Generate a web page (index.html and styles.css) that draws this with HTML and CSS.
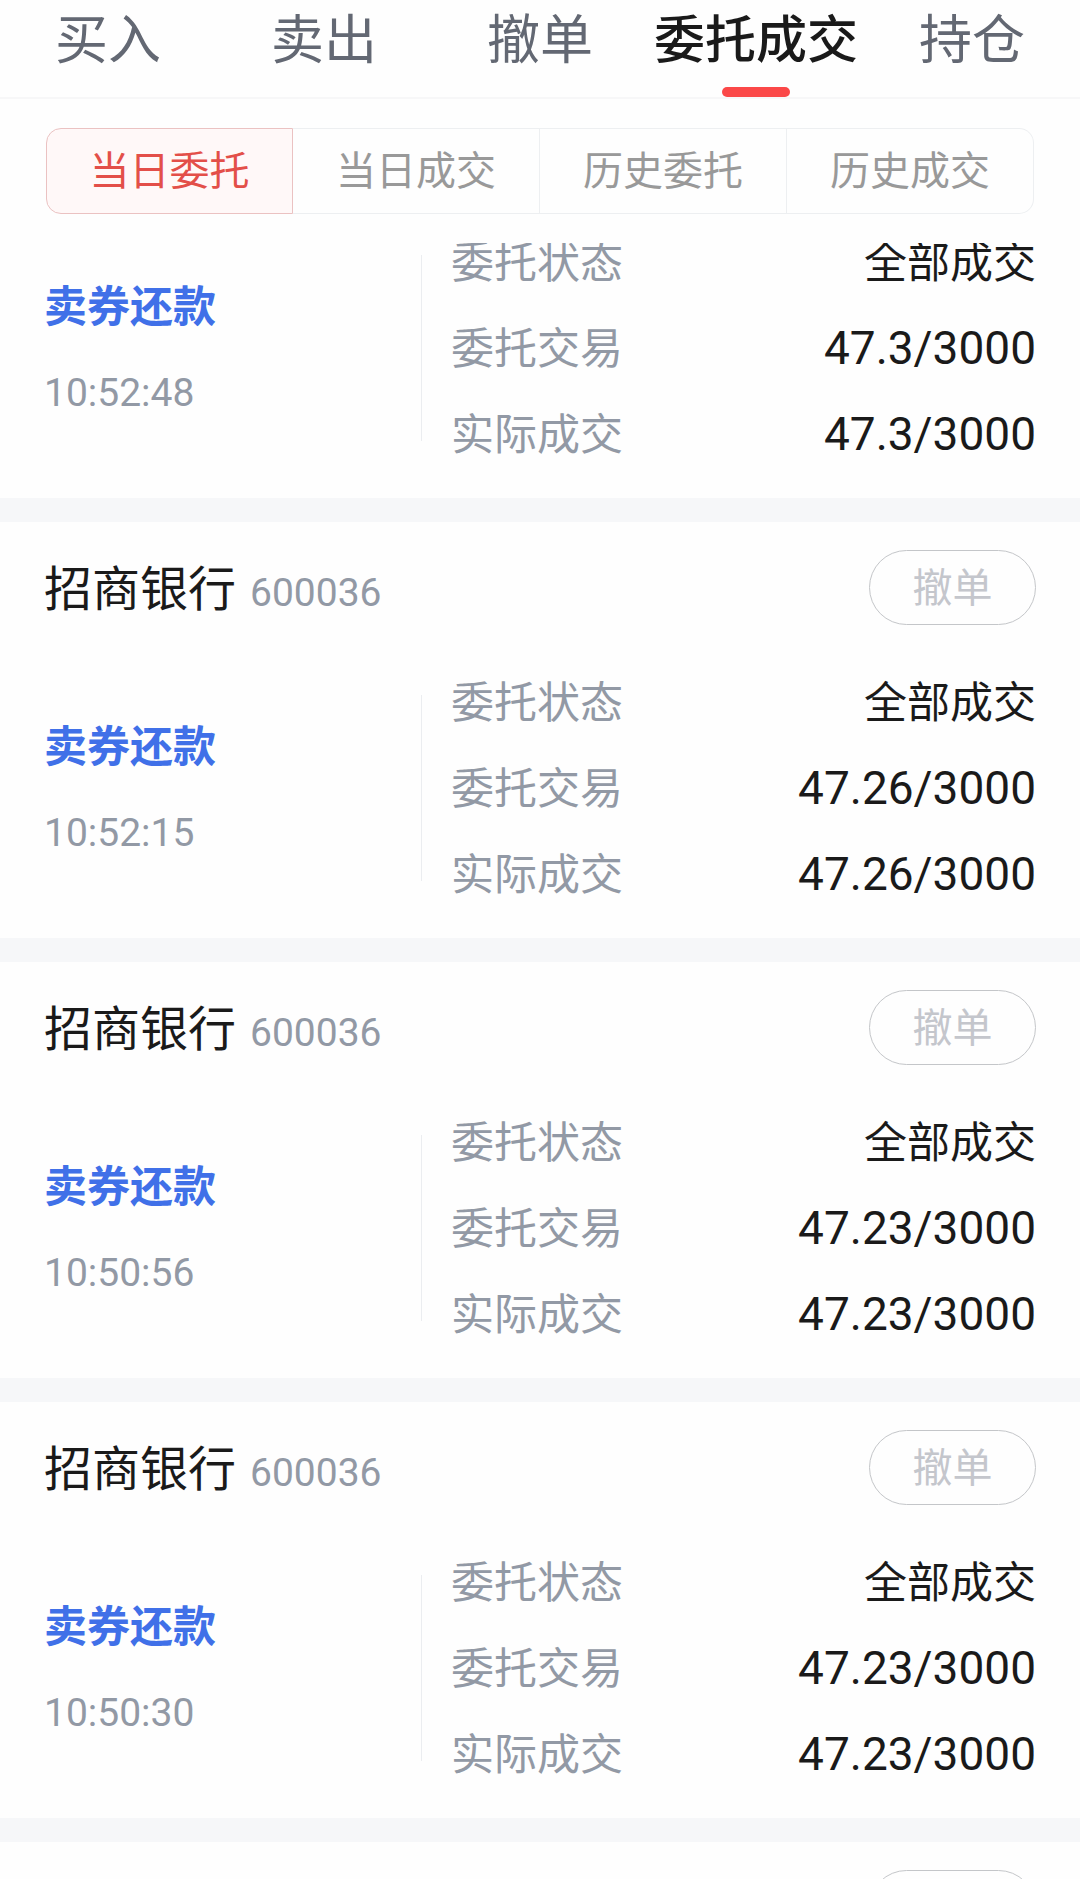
FILE: index.html
```html
<!DOCTYPE html>
<html lang="zh-CN">
<head>
<meta charset="utf-8">
<meta name="viewport" content="width=device-width, initial-scale=1">
<title>委托成交</title>
<link rel="stylesheet" href="styles.css">
</head>
<body>
<div class="app">
  <nav class="tabs">
    <a class="tab" href="#buy">买入</a>
    <a class="tab" href="#sell">卖出</a>
    <a class="tab" href="#cancel">撤单</a>
    <a class="tab tab-active" href="#orders" aria-current="page">委托成交</a>
    <a class="tab" href="#positions">持仓</a>
  </nav>
  <div class="filter">
    <div class="segments">
      <button class="segment segment-active" type="button" aria-pressed="true">当日委托</button>
      <button class="segment" type="button" aria-pressed="false">当日成交</button>
      <button class="segment" type="button" aria-pressed="false">历史委托</button>
      <button class="segment" type="button" aria-pressed="false">历史成交</button>
    </div>
  </div>
  <main class="orders">
    <article class="order order-scrolled">
      <div class="order-body">
        <div class="order-side"><strong class="side">卖券还款</strong><time class="time">10:52:48</time></div>
        <dl class="details">
          <div class="detail"><dt>委托状态</dt><dd>全部成交</dd></div>
          <div class="detail"><dt>委托交易</dt><dd class="number">47.3/3000</dd></div>
          <div class="detail"><dt>实际成交</dt><dd class="number">47.3/3000</dd></div>
        </dl>
      </div>
    </article>
    <article class="order">
      <header class="order-head">
        <h2 class="stock">招商银行 <span class="code">600036</span></h2>
        <button class="revoke" type="button" disabled>撤单</button>
      </header>
      <div class="order-body">
        <div class="order-side"><strong class="side">卖券还款</strong><time class="time">10:52:15</time></div>
        <dl class="details">
          <div class="detail"><dt>委托状态</dt><dd>全部成交</dd></div>
          <div class="detail"><dt>委托交易</dt><dd class="number">47.26/3000</dd></div>
          <div class="detail"><dt>实际成交</dt><dd class="number">47.26/3000</dd></div>
        </dl>
      </div>
    </article>
    <article class="order">
      <header class="order-head">
        <h2 class="stock">招商银行 <span class="code">600036</span></h2>
        <button class="revoke" type="button" disabled>撤单</button>
      </header>
      <div class="order-body">
        <div class="order-side"><strong class="side">卖券还款</strong><time class="time">10:50:56</time></div>
        <dl class="details">
          <div class="detail"><dt>委托状态</dt><dd>全部成交</dd></div>
          <div class="detail"><dt>委托交易</dt><dd class="number">47.23/3000</dd></div>
          <div class="detail"><dt>实际成交</dt><dd class="number">47.23/3000</dd></div>
        </dl>
      </div>
    </article>
    <article class="order">
      <header class="order-head">
        <h2 class="stock">招商银行 <span class="code">600036</span></h2>
        <button class="revoke" type="button" disabled>撤单</button>
      </header>
      <div class="order-body">
        <div class="order-side"><strong class="side">卖券还款</strong><time class="time">10:50:30</time></div>
        <dl class="details">
          <div class="detail"><dt>委托状态</dt><dd>全部成交</dd></div>
          <div class="detail"><dt>委托交易</dt><dd class="number">47.23/3000</dd></div>
          <div class="detail"><dt>实际成交</dt><dd class="number">47.23/3000</dd></div>
        </dl>
      </div>
    </article>
    <article class="order">
      <header class="order-head">
        <button class="revoke" type="button" aria-label="撤单" disabled></button>
      </header>
    </article>
  </main>
</div>
</body>
</html>
```

FILE: styles.css
```css
* {
  box-sizing: border-box;
}

body {
  margin: 0;
  background: #fefefe;
  color: #1a1a1a;
  font-family: "Noto Sans CJK SC", sans-serif;
}

button {
  font: inherit;
}

.app {
  display: flex;
  flex-direction: column;
  height: 100vh;
}

/* Top navigation */
.tabs {
  display: grid;
  grid-template-columns: repeat(5, 1fr);
  border-bottom: 2px solid #f7f7f8;
}

.tab {
  position: relative;
  padding: 0 0 24px;
  color: #636873;
  font-size: 53px;
  line-height: 73px;
  text-align: center;
  text-decoration: none;
  white-space: nowrap;
}

.tab-active {
  color: #1a1a1a;
  font-size: 51px;
  font-weight: 500;
}

.tab-active::after {
  content: "";
  position: absolute;
  bottom: 0;
  left: 50%;
  width: 68px;
  height: 10px;
  margin-left: -34px;
  border-radius: 5px;
  background: #fb4848;
}

/* Segmented filter */
.filter {
  padding: 29px 46px;
}

.segments {
  display: grid;
  grid-template-columns: repeat(4, 1fr);
}

.segment {
  height: 86px;
  padding: 0 0 6px;
  border: 1px solid #edeff1;
  border-left-width: 0;
  background: none;
  color: #999;
  font-size: 40px;
  line-height: 60px;
}

.segment:first-child {
  border-left-width: 1px;
  border-radius: 15px 0 0 15px;
}

.segment:last-child {
  border-radius: 0 15px 15px 0;
}

.segment-active {
  border-color: #ebc2c2;
  background: #fff8f8;
  color: #e34f49;
}

/* Order list */
.orders {
  flex: 1;
  min-height: 0;
  overflow: hidden;
}

.order {
  padding: 28px 44px 23px;
  border-bottom: 24px solid #f6f7f9;
}

.order-scrolled {
  margin-top: -26px;
  padding-top: 0;
}

.order-head {
  display: flex;
  align-items: center;
  margin-bottom: 32px;
}

.stock {
  display: flex;
  align-items: baseline;
  gap: 14px;
  height: 75px;
  margin: 0;
  font-size: 48px;
  font-weight: 400;
  line-height: 70px;
}

.code {
  color: #9299a5;
  font-family: Roboto, sans-serif;
  font-size: 39px;
}

.revoke {
  width: 167px;
  height: 75px;
  margin-left: auto;
  padding: 0 0 6px;
  border: 1px solid #c4c6c9;
  border-radius: 38px;
  background: none;
  color: #c4c6cc;
  font-size: 40px;
  line-height: 60px;
}

.order-body {
  display: flex;
  align-items: center;
}

.order-side {
  display: flex;
  flex: 0 0 38%;
  flex-direction: column;
  gap: 4px;
  padding-top: 4px;
  line-height: 86px;
}

.side {
  color: #4070e8;
  font-size: 43px;
  font-weight: 700;
}

.time {
  color: #9299a5;
  font-family: Roboto, sans-serif;
  font-size: 39px;
}

.details {
  position: relative;
  flex: 1;
  margin: 0;
  padding-left: 30px;
  font-size: 43px;
  line-height: 84px;
}

.details::before {
  content: "";
  position: absolute;
  top: 38px;
  bottom: 34px;
  left: 0;
  width: 1px;
  background: #ebedf0;
}

.detail {
  display: flex;
  justify-content: space-between;
  height: 86px;
}

.detail dt {
  color: #9299a5;
}

.detail dd {
  margin: 0;
}

.detail .number {
  font-family: Roboto, sans-serif;
  font-size: 46px;
  line-height: 90px;
}
```
